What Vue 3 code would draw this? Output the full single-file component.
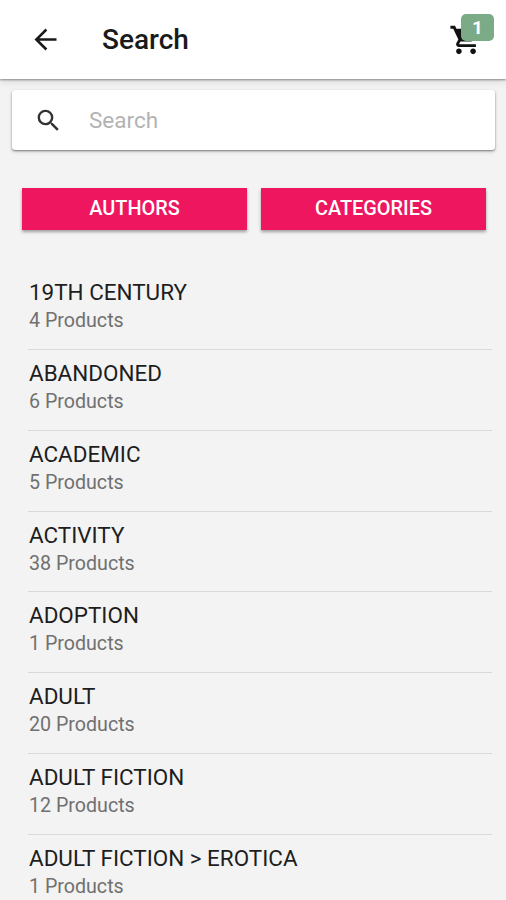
<script setup>
const cartCount = 1

const categories = [
  { name: '19TH CENTURY', products: 4 },
  { name: 'ABANDONED', products: 6 },
  { name: 'ACADEMIC', products: 5 },
  { name: 'ACTIVITY', products: 38 },
  { name: 'ADOPTION', products: 1 },
  { name: 'ADULT', products: 20 },
  { name: 'ADULT FICTION', products: 12 },
  { name: 'ADULT FICTION > EROTICA', products: 1 },
]
</script>

<template>
  <div class="page">
    <header class="toolbar">
      <svg class="back-icon" viewBox="0 0 24 24">
        <path d="M20 11.1H7.6l5.7-5.7L12 4l-8 8 8 8 1.3-1.4-5.7-5.7H20v-1.8z" />
      </svg>
      <h1 class="title">Search</h1>
      <div class="cart">
        <svg class="cart-icon" viewBox="0 0 24 24">
          <path d="M7 18c-1.1 0-1.99.9-1.99 2S5.9 22 7 22s2-.9 2-2-.9-2-2-2zM1 2v2h2l3.6 7.59-1.35 2.45c-.16.28-.25.61-.25.96 0 1.1.9 2 2 2h12v-2H7.42c-.14 0-.25-.11-.25-.25l.03-.12.9-1.63h7.45c.75 0 1.41-.41 1.75-1.03l3.58-6.49A1 1 0 0 0 20 4H5.21l-.94-2H1zm16 16c-1.1 0-1.99.9-1.99 2s.89 2 1.99 2 2-.9 2-2-.9-2-2-2z" />
        </svg>
        <span class="badge">{{ cartCount }}</span>
      </div>
    </header>

    <label class="search-bar">
      <svg class="search-icon" viewBox="0 0 24 24">
        <path d="M15.5 14h-.79l-.28-.27A6.471 6.471 0 0 0 16 9.5 6.5 6.5 0 1 0 9.5 16c1.61 0 3.09-.59 4.23-1.57l.27.28v.79l5 4.99L20.49 19l-4.99-5zm-6 0C7.01 14 5 11.99 5 9.5S7.01 5 9.5 5 14 7.01 14 9.5 11.99 14 9.5 14z" />
      </svg>
      <input class="search-input" type="text" placeholder="Search" />
    </label>

    <div class="filters">
      <button class="btn-filter">AUTHORS</button>
      <button class="btn-filter">CATEGORIES</button>
    </div>

    <ul class="list">
      <li v-for="category in categories" :key="category.name" class="list-item">
        <span class="item-name">{{ category.name }}</span>
        <span class="item-count">{{ category.products }} Products</span>
      </li>
    </ul>
  </div>
</template>

<style>
body {
  margin: 0;
  background: #f3f3f3;
}
</style>

<style scoped>
.page {
  box-sizing: border-box;
  height: 900px;
  overflow: hidden;
  background: #f3f3f3;
  font-family: Roboto, "Liberation Sans", sans-serif;
}

.toolbar {
  display: flex;
  align-items: center;
  box-sizing: border-box;
  height: 79px;
  padding: 0 23px 0 29px;
  background: #fff;
  box-shadow: 0 1px 2px rgba(0, 0, 0, 0.4), 0 3px 8px rgba(0, 0, 0, 0.1);
}

.back-icon {
  width: 33px;
  height: 33px;
  fill: #1a1a1a;
}

.title {
  margin: 1px 0 0 40px;
  font-size: 28px;
  font-weight: 500;
  line-height: 36px;
  color: #1a1a1a;
}

.cart {
  position: relative;
  height: 34px;
  margin-left: auto;
}

.cart-icon {
  display: block;
  width: 34px;
  height: 34px;
  fill: #111;
}

.badge {
  position: absolute;
  top: -9px;
  left: 12px;
  width: 33px;
  height: 27px;
  border-radius: 5px;
  background: #7bab86;
  color: #fff;
  font-size: 19px;
  font-weight: 700;
  line-height: 27px;
  text-align: center;
}

.search-bar {
  display: flex;
  align-items: center;
  height: 60px;
  margin: 11px 11px 0 12px;
  padding-left: 22px;
  box-sizing: border-box;
  border-radius: 3px;
  background: #fff;
  box-shadow: 0 1px 2px rgba(0, 0, 0, 0.45), 0 2px 4px rgba(0, 0, 0, 0.12);
}

.search-icon {
  width: 29px;
  height: 29px;
  fill: #333;
}

.search-input {
  flex: 1;
  min-width: 0;
  margin-left: 26px;
  padding: 0;
  border: none;
  outline: none;
  background: transparent;
  font-family: inherit;
  font-size: 22.5px;
  color: #222;
}

.search-input::placeholder {
  color: #b3b3b3;
}

.filters {
  display: grid;
  grid-template-columns: 1fr 1fr;
  gap: 14px;
  margin: 38px 20px 0 22px;
}

.btn-filter {
  height: 42px;
  padding: 0 0 2px;
  border: none;
  background: #ee175f;
  box-shadow: 0 2px 3px rgba(0, 0, 0, 0.35);
  color: #fff;
  font-family: inherit;
  font-size: 19.9px;
  font-weight: 500;
  cursor: pointer;
}

.list {
  margin: 39px 14px 0 28px;
  padding: 0;
  list-style: none;
}

.list-item {
  display: flex;
  flex-direction: column;
  gap: 1px;
  box-sizing: border-box;
  height: 80.85px;
  padding: 9px 0 0 1px;
  border-bottom: 1px solid #d9d9d9;
}

.item-name {
  font-size: 22.45px;
  line-height: 28px;
  color: #1e1e1e;
}

.item-count {
  font-size: 19.65px;
  line-height: 27px;
  color: #707070;
}
</style>
